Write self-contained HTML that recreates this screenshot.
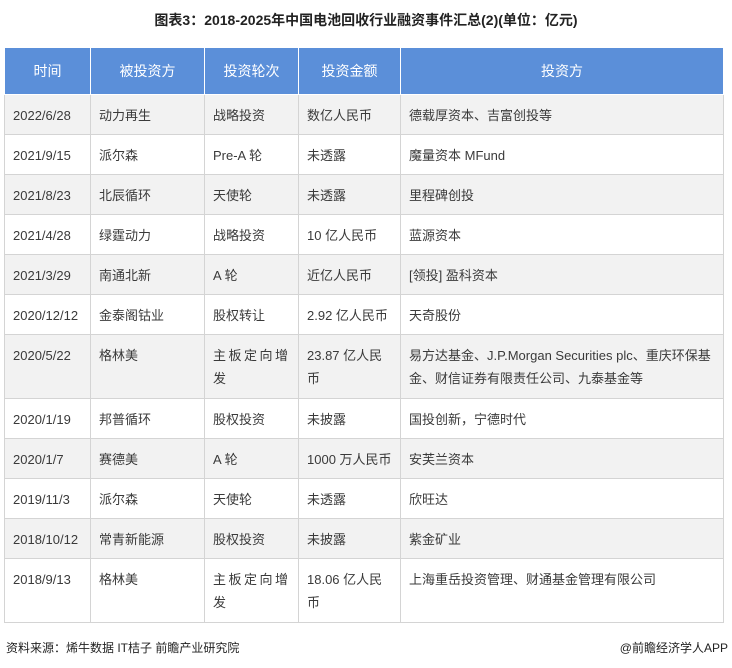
<!DOCTYPE html>
<html><head><meta charset="utf-8"><style>
body{margin:0;width:732px;height:668px;background:#fff;font-family:"Liberation Sans","Noto Sans CJK SC",sans-serif;position:relative;overflow:hidden}
.t{position:absolute;top:10px;left:0;width:732px;text-align:center;font-size:14px;font-weight:bold;color:#222}
table{position:absolute;left:4px;top:47px;border-collapse:collapse;table-layout:fixed;width:719px}
td,th{border:1px solid #d4d4d4;font-size:13px;color:#3a3a3a;padding:0 8px;vertical-align:top;line-height:23px;padding-top:9px;overflow:hidden}
th{background:#5b8fd9;color:#fff;font-weight:normal;text-align:center;vertical-align:middle;padding:0;height:46px;font-size:14px;border-color:#fff}
tr.g td{background:#f2f2f2}
tr{height:40px}
tr.tall{height:64px}
.j{letter-spacing:2.5px;padding-right:4px}
.f{position:absolute;top:639px;font-size:12px;color:#222}
</style></head><body>
<div class="t">图表3：2018-2025年中国电池回收行业融资事件汇总(2)(单位：亿元)</div>
<table>
<colgroup><col style="width:86px"><col style="width:114px"><col style="width:94px"><col style="width:102px"><col style="width:323px"></colgroup>
<tr><th>时间</th><th>被投资方</th><th>投资轮次</th><th>投资金额</th><th>投资方</th></tr>
<tr class="g"><td>2022/6/28</td><td>动力再生</td><td>战略投资</td><td>数亿人民币</td><td>德载厚资本、吉富创投等</td></tr>
<tr><td>2021/9/15</td><td>派尔森</td><td>Pre-A 轮</td><td>未透露</td><td>魔量资本 MFund</td></tr>
<tr class="g"><td>2021/8/23</td><td>北辰循环</td><td>天使轮</td><td>未透露</td><td>里程碑创投</td></tr>
<tr><td>2021/4/28</td><td>绿霆动力</td><td>战略投资</td><td>10 亿人民币</td><td>蓝源资本</td></tr>
<tr class="g"><td>2021/3/29</td><td>南通北新</td><td>A 轮</td><td>近亿人民币</td><td>[领投] 盈科资本</td></tr>
<tr><td>2020/12/12</td><td>金泰阁钴业</td><td>股权转让</td><td>2.92 亿人民币</td><td>天奇股份</td></tr>
<tr class="g tall"><td>2020/5/22</td><td>格林美</td><td class="j">主板定向增发</td><td>23.87 亿人民币</td><td>易方达基金、J.P.Morgan Securities plc、重庆环保基金、财信证券有限责任公司、九泰基金等</td></tr>
<tr><td>2020/1/19</td><td>邦普循环</td><td>股权投资</td><td>未披露</td><td>国投创新，宁德时代</td></tr>
<tr class="g"><td>2020/1/7</td><td>赛德美</td><td>A 轮</td><td>1000 万人民币</td><td>安芙兰资本</td></tr>
<tr><td>2019/11/3</td><td>派尔森</td><td>天使轮</td><td>未透露</td><td>欣旺达</td></tr>
<tr class="g"><td>2018/10/12</td><td>常青新能源</td><td>股权投资</td><td>未披露</td><td>紫金矿业</td></tr>
<tr class="tall"><td>2018/9/13</td><td>格林美</td><td class="j">主板定向增发</td><td>18.06 亿人民币</td><td>上海重岳投资管理、财通基金管理有限公司</td></tr>
</table>
<div class="f" style="left:6px">资料来源：烯牛数据 IT桔子 前瞻产业研究院</div>
<div class="f" style="right:4px">@前瞻经济学人APP</div>
</body></html>
